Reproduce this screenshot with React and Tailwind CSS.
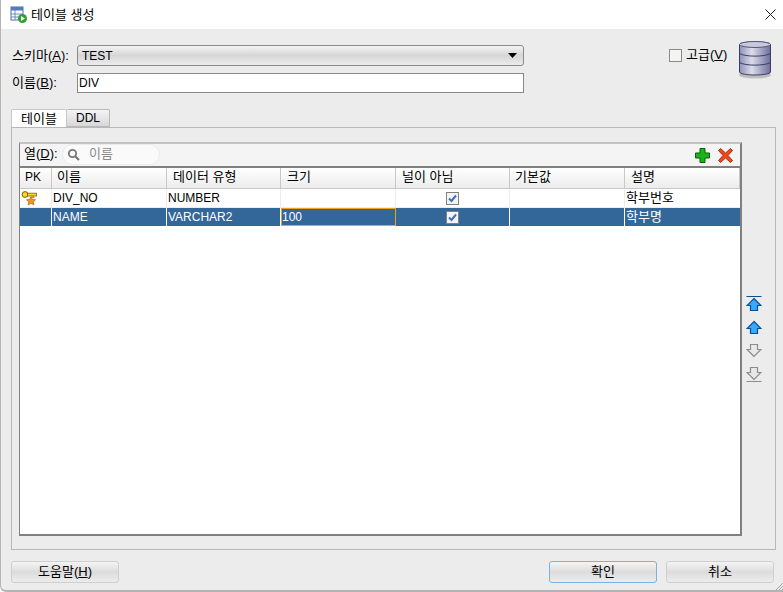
const font = { ko: "font-['Liberation_Sans','Noto_Sans_CJK_KR',sans-serif]" }

const columns = [
  { name: "PK", width: "w-[32px]", head: "pl-[5px] text-[12px]" },
  { name: "이름", width: "w-[115px]", head: "pl-[5px]" },
  { name: "데이터 유형", width: "w-[114px]", head: "pl-[6px]" },
  { name: "크기", width: "w-[115px]", head: "pl-[6px]" },
  { name: "널이 아님", width: "w-[114px]", head: "pl-[6px]" },
  { name: "기본값", width: "w-[115px]", head: "pl-[5px]" },
  { name: "설명", width: "w-[115px]", head: "pl-[6px]" },
]

const rows = [
  { pk: true, name: "DIV_NO", type: "NUMBER", size: "", desc: "학부번호", selected: false },
  { pk: false, name: "NAME", type: "VARCHAR2", size: "100", desc: "학부명", selected: true },
]

function AppIcon() {
  return (
    <svg width="17" height="17" viewBox="0 0 17 17">
      <rect x="1" y="1" width="12" height="13" fill="#fff" stroke="#4f6f9f" />
      <rect x="1" y="1" width="12" height="3.5" fill="#4f7cc0" />
      <path d="M1 8h12M1 11h12M5 4v10" stroke="#6d8bb8" />
      <circle cx="12.5" cy="12.5" r="4.5" fill="#2e9e2e" />
      <path d="M11 10l4 2.5-4 2.5z" fill="#fff" />
    </svg>
  )
}

function Database() {
  return (
    <svg width="36" height="42" viewBox="0 0 36 42">
      <defs>
        <linearGradient id="db" x1="0" x2="1" y1="0" y2="0">
          <stop offset="0" stopColor="#8f90b8" />
          <stop offset="0.4" stopColor="#dcdcea" />
          <stop offset="1" stopColor="#6d6e9c" />
        </linearGradient>
      </defs>
      <ellipse cx="18" cy="37" rx="16" ry="3.5" fill="#00000030" />
      <path d="M2.5 6.5C2.5 3 33.5 3 33.5 6.5V34C33.5 38 2.5 38 2.5 34Z" fill="url(#db)" stroke="#3c3d66" />
      <ellipse cx="18" cy="6.5" rx="15.5" ry="3" fill="#c9c9dc" stroke="#55567f" />
      <path d="M2.5 15.5C8 19 28 19 33.5 15.5M2.5 24.5C8 28 28 28 33.5 24.5" fill="none" stroke="#3c3d66" />
    </svg>
  )
}

function KeyIcon() {
  return (
    <svg width="17" height="17" viewBox="0 0 17 17">
      <circle cx="4" cy="4.5" r="2.9" fill="#ffd52e" stroke="#7d6000" />
      <rect x="6.5" y="3.2" width="9" height="2.8" fill="#ffd52e" stroke="#7d6000" strokeWidth="0.8" />
      <rect x="11" y="6" width="2.4" height="2" fill="#c79a10" />
      <path d="M10 6.5l1.4 3 3.1.3-2.3 2.1.7 3.1-2.9-1.7-2.9 1.7.7-3.1-2.3-2.1 3.1-.3z" fill="#f7941d" stroke="#b8610a" strokeWidth="0.7" />
    </svg>
  )
}

function Check() {
  return (
    <span className="flex h-[13px] w-[13px] items-center justify-center border border-[#808080] bg-[#f4f4f4]">
      <svg width="9" height="9" viewBox="0 0 9 9">
        <path d="M1 4.5l2.5 2.5L8 1.5" fill="none" stroke="#3d6fc4" strokeWidth="2" />
      </svg>
    </span>
  )
}

function Arrow({ down, bar, active }) {
  const fill = active ? "#35aaff" : "#e8e8e8"
  const stroke = active ? "#0a4f8f" : "#8c8c8c"
  return (
    <svg width="16" height="17" viewBox="0 0 16 17">
      <g transform={down ? "rotate(180 8 8.5)" : undefined}>
        <path d="M8 2.5L15 9.5H11.5v5h-7v-5H1Z" fill={fill} stroke={stroke} strokeWidth="1.2" />
        {bar && <path d="M.5 .5h15" stroke={stroke} />}
      </g>
    </svg>
  )
}

function Button({ children, focused }) {
  return (
    <button className={`h-[22px] w-[108px] rounded-[3px] border bg-gradient-to-b from-[#f5f5f5] via-[#dcdcdc] to-[#ececec] text-[13px] text-black ${focused ? "border-[#7fb0e0]" : "border-[#cfcfcf]"}`}>
      {children}
    </button>
  )
}

export default function App() {
  return (
    <div className={`relative flex h-[592px] w-[783px] flex-col overflow-hidden rounded-bl-[6px] border-b-2 border-l border-[#b4b4b4] bg-[#ececec] text-[12px] text-black ${font.ko}`}>
      {/* title bar */}
      <div className="flex h-[29px] shrink-0 items-center bg-white pl-[9px] pr-[7px]">
        <AppIcon />
        <span className="ml-[4px] text-[13px]">테이블 생성</span>
        <svg className="ml-auto" width="11" height="11" viewBox="0 0 11 11">
          <path d="M.5 .5l10 10M10.5 .5l-10 10" stroke="#222" strokeWidth="1" />
        </svg>
      </div>

      <div className="flex min-h-0 flex-1 flex-col px-[10px] pr-[7px]">
        {/* schema + name */}
        <div className="mt-[16px] flex">
          <div className="flex flex-col">
            <div className="flex h-[21px] items-center">
              <span className="w-[66px] pl-px text-[13px]">스키마(<u>A</u>):</span>
              <div className="flex h-[21px] w-[447px] items-center justify-between rounded-[3px] border border-[#8a8a8a] bg-gradient-to-b from-[#f4f4f4] via-[#d6d6d6] to-[#ececec] pl-[4px] pr-[6px]">
                <span>TEST</span>
                <svg width="9" height="5" viewBox="0 0 9 5"><path d="M0 0h9L4.5 5z" fill="#000" /></svg>
              </div>
            </div>
            <div className="mt-[7px] flex h-[20px] items-center">
              <span className="w-[66px] pl-px text-[13px]">이름(<u>B</u>):</span>
              <div className="flex h-[20px] w-[447px] items-center border border-[#8a8a8a] bg-white pl-px">DIV</div>
            </div>
          </div>
          <div className="ml-[145px] mt-[3px] flex h-[14px] w-[58px] items-center gap-[4px] whitespace-nowrap text-[13px]">
            <span className="h-[13px] w-[13px] shrink-0 border border-[#8a8a8a] bg-[#f4f4f4]" />
            <span>고급(<u>V</u>)</span>
          </div>
          <div className="ml-[10px] -mt-[7px]"><Database /></div>
        </div>

        {/* tabs */}
        <div className="mt-[16px] flex h-[18px] items-stretch text-[13px]">
          <div className="flex w-[56px] items-center justify-center rounded-t-[2px] border border-b-0 border-[#c8c8c8] bg-white">테이블</div>
          <div className="flex w-[43px] items-center justify-center rounded-t-[2px] border border-l-0 border-[#b8b8b8] bg-gradient-to-b from-[#f4f4f4] to-[#d8d8d8] text-[12px]">DDL</div>
        </div>

        {/* tab panel */}
        <div className="flex h-[423px] w-[765px] border border-[#b8b8b8] pl-[7px] pt-[14px]">
          <div className="flex h-[394px] w-[723px] flex-col border-b-2 border-l border-r-2 border-t-2 border-[#c4c4c4] border-b-[#808080] border-l-[#808080] border-r-[#808080]">
            {/* toolbar */}
            <div className="flex h-[22px] shrink-0 items-center bg-[#f4f4f4] pl-[4px] pr-[6px]">
              <span className="w-[38px] shrink-0 whitespace-nowrap pb-[3px] text-[13px]">열(<u>D</u>):</span>
              <div className="flex h-[21px] w-[98px] items-center self-start rounded-full border border-[#ececec] bg-[#fafafa] pb-px pl-[4px] text-[13px] text-[#8a8a8a]">
                <svg width="13" height="13" viewBox="0 0 13 13">
                  <circle cx="5.5" cy="5.5" r="3.7" fill="none" stroke="#777" strokeWidth="1.8" />
                  <path d="M8.5 8.5l3.5 3.5" stroke="#777" strokeWidth="2.2" />
                </svg>
                <span className="ml-[9px]">이름</span>
              </div>
              <div className="ml-auto flex items-center gap-[6px]">
                <svg width="17" height="17" viewBox="0 0 17 17">
                  <path d="M6 1.5h5v4.5h4.5v5H11v4.5H6V11H1.5V6H6Z" fill="#19b419" stroke="#0a5f0a" />
                </svg>
                <svg width="17" height="17" viewBox="0 0 17 17">
                  <path d="M3.5 1.5L8.5 6l5-4.5 2 2L11 8.5l4.5 5-2 2-5-4.5-5 4.5-2-2L6 8.5l-4.5-5Z" fill="#f0481e" stroke="#a83010" />
                </svg>
              </div>
            </div>

            {/* grid */}
            <div className="flex min-h-0 flex-1 flex-col border-t-2 border-[#808080] bg-white">
              <div className="flex h-[21px] shrink-0 border-b border-[#c8c8c8] bg-gradient-to-b from-white to-[#ececec] text-[13px]">
                {columns.map((col) => (
                  <div key={col.name} className={`flex items-center border-r border-[#c8c8c8] pb-[2px] ${col.width} ${col.head}`}>{col.name}</div>
                ))}
              </div>
              {rows.map((row) => (
                <div key={row.name} className={`flex h-[19px] shrink-0 border-b ${row.selected ? "border-white bg-[#336699] text-white" : "border-[#ececec]"}`}>
                  <div className={`flex items-center border-r pl-px ${columns[0].width} ${row.selected ? "border-white" : "border-[#ececec]"}`}>
                    {row.pk && <KeyIcon />}
                  </div>
                  <div className={`flex items-center border-r pl-px ${columns[1].width} ${row.selected ? "border-white" : "border-[#ececec]"}`}>{row.name}</div>
                  <div className={`flex items-center border-r pl-px ${columns[2].width} ${row.selected ? "border-white" : "border-[#ececec]"}`}>{row.type}</div>
                  {row.selected ? (
                    <div className={`flex items-center border border-[#f0a020] ${columns[3].width}`}>{row.size}</div>
                  ) : (
                    <div className={`border-r border-[#ececec] ${columns[3].width}`} />
                  )}
                  <div className={`flex items-center justify-center border-r ${columns[4].width} ${row.selected ? "border-white" : "border-[#ececec]"}`}><Check /></div>
                  <div className={`border-r ${columns[5].width} ${row.selected ? "border-white" : "border-[#ececec]"}`} />
                  <div className={`flex items-center pl-px text-[13px] ${columns[6].width}`}>{row.desc}</div>
                </div>
              ))}
            </div>
          </div>

          {/* move buttons */}
          <div className="ml-[4px] mt-[154px] flex h-fit flex-col gap-[6px]">
            <Arrow active bar />
            <Arrow active />
            <Arrow down />
            <Arrow down bar />
          </div>
        </div>

        {/* footer */}
        <div className="mt-[11px] flex">
          <Button>도움말(<u>H</u>)</Button>
          <div className="ml-auto mr-[2px] flex gap-[9px]">
            <Button focused>확인</Button>
            <Button>취소</Button>
          </div>
        </div>
      </div>

      {/* resize grip */}
      <svg className="absolute bottom-0 right-0" width="8" height="8" viewBox="0 0 8 8">
        <path d="M1 8l7-7M4 8l4-4M7 8l1-1" stroke="#a0a0a0" />
      </svg>
    </div>
  )
}
